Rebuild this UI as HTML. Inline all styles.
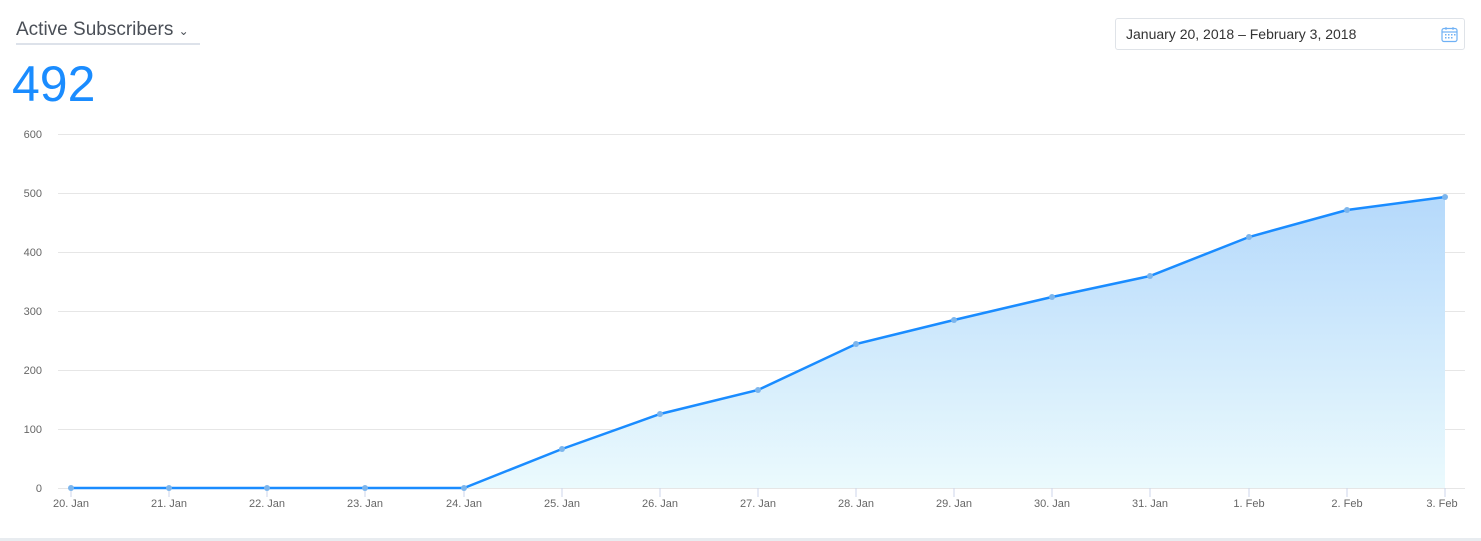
<!DOCTYPE html>
<html><head><style>
body{margin:0;width:1481px;height:541px;background:#fff;font-family:"Liberation Sans",sans-serif;position:relative;overflow:hidden}
.title{position:absolute;left:16px;top:19px;font-size:19px;color:#4a4f57;border-bottom:2px solid #dde2ea;padding-bottom:2px;width:184px}
.num{position:absolute;left:12px;top:55px;font-size:50px;color:#1a8cff}
.date{position:absolute;left:1115px;top:18px;width:350px;height:32px;border:1px solid #dfe3e8;border-radius:3px;font-size:14px;color:#333;line-height:31px;box-sizing:border-box;padding-left:10px}
.bot{position:absolute;left:0;top:538px;width:1481px;height:3px;background:#e8ecf0}
</style></head><body>
<div class="title">Active Subscribers <span style="font-size:12px">&#8964;</span></div>
<div class="num">492</div>
<div class="date">January 20, 2018 – February 3, 2018
<svg style="position:absolute;right:6px;top:7px" width="17" height="17" viewBox="0 0 17 17"><rect x="1" y="2.5" width="15" height="13" rx="2" fill="none" stroke="#6fb1f5" stroke-width="1.2"/><line x1="1" y1="6" x2="16" y2="6" stroke="#6fb1f5" stroke-width="1.2"/><line x1="5" y1="1" x2="5" y2="4" stroke="#6fb1f5"/><line x1="12" y1="1" x2="12" y2="4" stroke="#6fb1f5"/><g fill="#6fb1f5"><rect x="4" y="8" width="1.5" height="1.5"/><rect x="7" y="8" width="1.5" height="1.5"/><rect x="10" y="8" width="1.5" height="1.5"/><rect x="13" y="8" width="1.5" height="1.5"/><rect x="4" y="11" width="1.5" height="1.5"/><rect x="7" y="11" width="1.5" height="1.5"/><rect x="10" y="11" width="1.5" height="1.5"/></g></svg></div>
<svg style="position:absolute;left:0;top:0" width="1481" height="541">
<defs><linearGradient id="g" x1="0" y1="0" x2="0" y2="1"><stop offset="0" stop-color="#b5d9fb"/><stop offset="1" stop-color="#ebfafd"/></linearGradient></defs>
<g stroke="#e6e6e6" stroke-width="1">
<line x1="58" y1="134.5" x2="1465" y2="134.5"/><line x1="58" y1="193.5" x2="1465" y2="193.5"/><line x1="58" y1="252.5" x2="1465" y2="252.5"/><line x1="58" y1="311.5" x2="1465" y2="311.5"/><line x1="58" y1="370.5" x2="1465" y2="370.5"/><line x1="58" y1="429.5" x2="1465" y2="429.5"/><line x1="58" y1="488.5" x2="1465" y2="488.5"/>
</g>
<g font-size="11" fill="#666" text-anchor="end">
<text x="42" y="138">600</text><text x="42" y="197">500</text><text x="42" y="256">400</text><text x="42" y="315">300</text><text x="42" y="374">200</text><text x="42" y="433">100</text><text x="42" y="492">0</text>
</g>
<path d="M71,488 L169,488 267,488 365,488 464,488 562,449 660,414 758,390 856,344 954,320 1052,297 1150,276 1249,237 1347,210 1445,197 L1445,488 Z" fill="url(#g)"/>
<g stroke="#ccd6eb"><line x1="71" y1="488" x2="71" y2="497"/><line x1="169" y1="488" x2="169" y2="497"/><line x1="267" y1="488" x2="267" y2="497"/><line x1="365" y1="488" x2="365" y2="497"/><line x1="464" y1="488" x2="464" y2="497"/><line x1="562" y1="488" x2="562" y2="497"/><line x1="660" y1="488" x2="660" y2="497"/><line x1="758" y1="488" x2="758" y2="497"/><line x1="856" y1="488" x2="856" y2="497"/><line x1="954" y1="488" x2="954" y2="497"/><line x1="1052" y1="488" x2="1052" y2="497"/><line x1="1150" y1="488" x2="1150" y2="497"/><line x1="1249" y1="488" x2="1249" y2="497"/><line x1="1347" y1="488" x2="1347" y2="497"/><line x1="1445" y1="488" x2="1445" y2="497"/></g>
<polyline points="71,488 169,488 267,488 365,488 464,488 562,449 660,414 758,390 856,344 954,320 1052,297 1150,276 1249,237 1347,210 1445,197" fill="none" stroke="#1a8cff" stroke-width="2.5"/>
<g fill="#7cb5ec"><circle cx="71" cy="488" r="3"/><circle cx="169" cy="488" r="3"/><circle cx="267" cy="488" r="3"/><circle cx="365" cy="488" r="3"/><circle cx="464" cy="488" r="3"/><circle cx="562" cy="449" r="3"/><circle cx="660" cy="414" r="3"/><circle cx="758" cy="390" r="3"/><circle cx="856" cy="344" r="3"/><circle cx="954" cy="320" r="3"/><circle cx="1052" cy="297" r="3"/><circle cx="1150" cy="276" r="3"/><circle cx="1249" cy="237" r="3"/><circle cx="1347" cy="210" r="3"/><circle cx="1445" cy="197" r="3"/></g>
<g font-size="11" fill="#666" text-anchor="middle">
<text x="71" y="507">20. Jan</text><text x="169" y="507">21. Jan</text><text x="267" y="507">22. Jan</text><text x="365" y="507">23. Jan</text><text x="464" y="507">24. Jan</text><text x="562" y="507">25. Jan</text><text x="660" y="507">26. Jan</text><text x="758" y="507">27. Jan</text><text x="856" y="507">28. Jan</text><text x="954" y="507">29. Jan</text><text x="1052" y="507">30. Jan</text><text x="1150" y="507">31. Jan</text><text x="1249" y="507">1. Feb</text><text x="1347" y="507">2. Feb</text><text x="1442" y="507">3. Feb</text>
</g>
</svg>
<div class="bot"></div>
</body></html>
